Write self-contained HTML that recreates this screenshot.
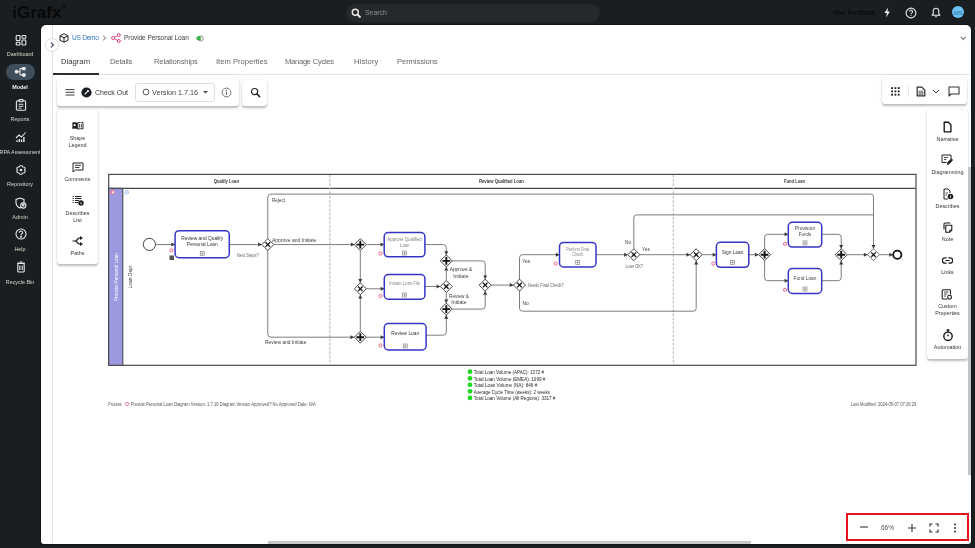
<!DOCTYPE html>
<html><head><meta charset="utf-8">
<style>
*{box-sizing:border-box;margin:0;padding:0}
html,body{width:975px;height:548px;overflow:hidden;background:#1b1e20;font-family:"Liberation Sans",sans-serif}
body>*{will-change:transform}
.abs{position:absolute}
.t{position:absolute;white-space:nowrap;line-height:1}
#panel{position:absolute;left:40.8px;top:24.9px;width:930px;height:519px;box-shadow:0 0 0 1px #131616;background:#fff;border-radius:5px 5px 3px 3px}
.card{position:absolute;background:#fff;border-radius:3px;box-shadow:0 1.2px 2.2px rgba(0,0,0,.26),0 0 1px rgba(0,0,0,.12)}
.sl{position:absolute;left:-5px;width:50px;text-align:center;color:#d9d6cf;font-size:5.4px;line-height:1;margin-top:0.5px;white-space:nowrap}
.pl{position:absolute;text-align:center;color:#363636;margin-top:.4px;font-size:5.4px;line-height:1.3}
.tab{position:absolute;top:58.3px;font-size:7.6px;color:#666;line-height:1}
</style></head>
<body>
<!-- top bar -->
<svg class="abs" style="left:0;top:0" width="80" height="25" viewBox="0 0 80 25"><text x="12.2" y="17.9" font-family="Liberation Sans" font-size="16.8" font-weight="700" fill="#080808" textLength="49.3" lengthAdjust="spacingAndGlyphs">iGrafx</text><circle cx="63.6" cy="6.8" r="1.3" fill="none" stroke="#080808" stroke-width=".7"/></svg>
<div class="abs" style="left:345.5px;top:3.6px;width:254px;height:18.2px;border-radius:9px;background:#26292c"></div>
<svg class="abs" style="left:350.5px;top:7.5px" width="11" height="11" viewBox="0 0 11 11"><circle cx="4.3" cy="4.3" r="3" fill="none" stroke="#e6e6e6" stroke-width="1.5"/><path d="M6.5 6.5L9.5 9.5" stroke="#e6e6e6" stroke-width="1.8"/></svg>
<div class="t" style="left:365px;top:10px;font-size:6.9px;color:#8f9295">Search</div>
<div class="t" style="left:832.6px;top:10.1px;font-size:6.3px;letter-spacing:-0.2px;font-weight:700;color:#0b0b0b">Give Feedback</div>
<svg class="abs" style="left:883px;top:7px" width="8" height="11" viewBox="0 0 8 11"><path d="M5.2 .4L1.4 6H3.9L3 10.4L6.9 4.6H4.4Z" fill="#f0f0f0"/></svg>
<svg class="abs" style="left:905px;top:6.8px" width="12" height="12" viewBox="0 0 12 12"><circle cx="6" cy="6" r="4.9" fill="none" stroke="#e8e8e8" stroke-width="1.1"/><path d="M4.5 4.8a1.5 1.5 0 1 1 2.2 1.3c-.5.3-.7.5-.7 1.1" fill="none" stroke="#e8e8e8" stroke-width="1.05"/><circle cx="6" cy="8.5" r=".6" fill="#e8e8e8"/></svg>
<svg class="abs" style="left:930.5px;top:6.8px" width="10" height="11" viewBox="0 0 10 11"><path d="M5 1.2c-1.8 0-2.8 1.3-2.8 3v2.6L1.1 8.3h7.8L7.8 6.8V4.2C7.8 2.5 6.8 1.2 5 1.2Z" fill="none" stroke="#ececec" stroke-width="1.1" stroke-linejoin="round"/><path d="M3.9 9.3a1.1 1.1 0 0 0 2.2 0Z" fill="#ececec"/></svg>
<div class="abs" style="left:952.1px;top:6.3px;width:12.4px;height:12.4px;border-radius:50%;background:#6cc3f3"></div>
<div class="t" style="left:952.1px;top:9.5px;width:12.4px;text-align:center;font-size:6px;color:#2f6896">MS</div>

<!-- sidebar -->
<div id="sidebar"></div>
<svg class="abs" style="left:14.5px;top:34px" width="12" height="12" viewBox="0 0 12 12" fill="none" stroke="#e8e8e8" stroke-width="1.1"><rect x="1.2" y="1.5" width="3.8" height="5" rx=".7"/><rect x="7" y="1.5" width="3.8" height="2.8" rx=".7"/><rect x="1.2" y="8.2" width="3.8" height="2.8" rx=".7"/><rect x="7" y="6" width="3.8" height="5" rx=".7"/></svg>
<div class="sl" style="top:51.3px;">Dashboard</div>
<div class="abs" style="left:6px;top:64px;width:28.5px;height:16px;border-radius:8px;background:#3e4e5a"></div>
<svg class="abs" style="left:14px;top:66px" width="12" height="12" viewBox="0 0 12 12"><circle cx="2.6" cy="5.7" r="1.9" fill="#e8e8e8"/><circle cx="9.9" cy="8.9" r="2" fill="#e8e8e8"/><rect x="8.1" y="1" width="3.5" height="3.3" fill="#e8e8e8"/><path d="M2.6 5.7H6M6 2.6V8.9M6 2.6H8.5M6 8.9H9" fill="none" stroke="#e8e8e8" stroke-width="1.1"/></svg>
<div class="sl" style="top:84.3px;font-weight:700;color:#f2f2f2">Model</div>
<svg class="abs" style="left:14.5px;top:98.7px" width="12" height="12" viewBox="0 0 12 12" fill="none" stroke="#e8e8e8" stroke-width="1.1"><rect x="1.4" y="1.8" width="9.2" height="9.4" rx="1"/><rect x="4" y=".6" width="4" height="2.2" rx=".5" fill="#1b1e20"/><path d="M3.6 5.3H8.4M3.6 7.3H8.4M3.6 9.2H6.6" stroke-width=".9"/></svg>
<div class="sl" style="top:116.8px;">Reports</div>
<svg class="abs" style="left:14.5px;top:131px" width="12" height="12" viewBox="0 0 12 12" fill="none" stroke="#e8e8e8" stroke-width="1.1"><path d="M1 7L4 4L6.5 6L10.5 1.5"/><path d="M2 11V9.5M4.3 11V8M6.6 11V8.5M8.9 11V6" stroke-width="1.4"/></svg>
<div class="sl" style="top:149.3px;">RPA Assessment</div>
<svg class="abs" style="left:14.5px;top:164px" width="12" height="12" viewBox="0 0 12 12" fill="none" stroke="#e8e8e8" stroke-width="1.1"><circle cx="6.00" cy="9.00" r="2.1" fill="#e8e8e8" stroke="none"/><circle cx="3.40" cy="7.50" r="2.1" fill="#e8e8e8" stroke="none"/><circle cx="3.40" cy="4.50" r="2.1" fill="#e8e8e8" stroke="none"/><circle cx="6.00" cy="3.00" r="2.1" fill="#e8e8e8" stroke="none"/><circle cx="8.60" cy="4.50" r="2.1" fill="#e8e8e8" stroke="none"/><circle cx="8.60" cy="7.50" r="2.1" fill="#e8e8e8" stroke="none"/><circle cx="6.00" cy="9.00" r="1.05" fill="#1b1e20" stroke="none"/><circle cx="3.40" cy="7.50" r="1.05" fill="#1b1e20" stroke="none"/><circle cx="3.40" cy="4.50" r="1.05" fill="#1b1e20" stroke="none"/><circle cx="6.00" cy="3.00" r="1.05" fill="#1b1e20" stroke="none"/><circle cx="8.60" cy="4.50" r="1.05" fill="#1b1e20" stroke="none"/><circle cx="8.60" cy="7.50" r="1.05" fill="#1b1e20" stroke="none"/><circle cx="6" cy="6" r="3.0" fill="#1b1e20" stroke="none"/><circle cx="6" cy="6" r="1.3" fill="#e8e8e8" stroke="none"/></svg>
<div class="sl" style="top:181.8px;">Repository</div>
<svg class="abs" style="left:14.5px;top:197px" width="12" height="12" viewBox="0 0 12 12" fill="none" stroke="#e8e8e8" stroke-width="1.1"><path d="M5 1L9 2.5V5.5C9 8.2 7.3 10 5 11C2.7 10 1 8.2 1 5.5V2.5Z"/><circle cx="8.3" cy="8.5" r="2.6" fill="#1b1e20"/><circle cx="8.3" cy="8.2" r=".8"/></svg>
<div class="sl" style="top:214.3px;">Admin</div>
<svg class="abs" style="left:14.5px;top:228px" width="12" height="12" viewBox="0 0 12 12" fill="none" stroke="#e8e8e8" stroke-width="1.1"><circle cx="6" cy="6" r="5"/><path d="M4.4 4.7a1.6 1.6 0 1 1 2.3 1.4c-.6.3-.7.6-.7 1.2"/><circle cx="6" cy="8.8" r=".5" fill="#e8e8e8"/></svg>
<div class="sl" style="top:246.8px;">Help</div>
<svg class="abs" style="left:14.5px;top:261px" width="12" height="12" viewBox="0 0 12 12" fill="none" stroke="#e8e8e8" stroke-width="1.1"><path d="M2 2.2H10"/><rect x="2.8" y="2.5" width="6.4" height="8.5" rx="1"/><path d="M4.8 4.5V9M7.2 4.5V9M4.5 1H7.5"/></svg>
<div class="sl" style="top:279.3px;">Recycle Bin</div>

<!-- panel -->
<div id="panel"></div>
<div class="abs" style="left:52px;top:25px;width:1px;height:518px;background:#e2e2e2"></div>
<div class="abs" style="left:45px;top:37.5px;width:14px;height:14px;border-radius:50%;background:#fff;border:1px solid #dcdcdc"></div>
<svg class="abs" style="left:48px;top:40.5px" width="8" height="8" viewBox="0 0 8 8"><path d="M3 1.6L5.4 4L3 6.4" fill="none" stroke="#464d66" stroke-width="1.2"/></svg>


<!--DIAGRAM--><svg class="abs" style="left:0;top:0" width="975" height="548" viewBox="0 0 975 548" font-family="Liberation Sans, sans-serif"><rect x="108.7" y="174.4" width="807.3" height="190.9" fill="#fff" stroke="#4a4a4a" stroke-width="1.2"/><rect x="108.7" y="188.4" width="14.1" height="176.9" fill="#9c99e0" stroke="#4a4a4a" stroke-width="1.1"/><path d="M108.7,188.4H916" fill="none" stroke="#4a4a4a" stroke-width="1.2"/><path d="M329.9,175.0V364.7" fill="none" stroke="#ececec" stroke-width="0.8"/><path d="M329.9,175.0V364.7" fill="none" stroke="#a8a8a8" stroke-width="0.8" stroke-dasharray="2.4,1.8"/><path d="M673.3,175.0V364.7" fill="none" stroke="#ececec" stroke-width="0.8"/><path d="M673.3,175.0V364.7" fill="none" stroke="#a8a8a8" stroke-width="0.8" stroke-dasharray="2.4,1.8"/><text x="226.4" y="181.6" font-size="4.8" fill="#383838" text-anchor="middle" dominant-baseline="central" font-weight="700" textLength="25.1" lengthAdjust="spacingAndGlyphs" >Qualify Loan</text><text x="501.4" y="181.6" font-size="4.8" fill="#383838" text-anchor="middle" dominant-baseline="central" font-weight="700" textLength="44.8" lengthAdjust="spacingAndGlyphs" >Review Qualified Loan</text><text x="794.5" y="181.6" font-size="4.8" fill="#383838" text-anchor="middle" dominant-baseline="central" font-weight="700" textLength="20.8" lengthAdjust="spacingAndGlyphs" >Fund Loan</text><circle cx="112.8" cy="192.3" r="2.3" fill="#f07a8e"/><circle cx="113" cy="192.3" r="1.1" fill="#fff"/><circle cx="126.9" cy="192.3" r="2.3" fill="#b5d0f7"/><circle cx="126.9" cy="192.3" r="1.1" fill="#e8f0fc"/><text x="116.1" y="277.1" font-size="4.8" fill="#fff" text-anchor="middle" dominant-baseline="central" font-weight="400" textLength="48.2" lengthAdjust="spacingAndGlyphs" transform="rotate(-90 116.1 277.1)">Provide Personal Loan</text><text x="130.4" y="277.1" font-size="4.5" fill="#3a3a3a" text-anchor="middle" dominant-baseline="central" font-weight="400" textLength="23" lengthAdjust="spacingAndGlyphs" transform="rotate(-90 130.4 277.1)">Loan Dept</text><path d="M155.6,244.6H175" fill="none" stroke="#6e6e6e" stroke-width="0.9"/><polygon points="175.1,244.6 171.4,242.6 171.4,246.6" fill="#3a3a3a"/><path d="M229.3,244.6H261.8" fill="none" stroke="#6e6e6e" stroke-width="0.9"/><polygon points="261.8,244.6 258.1,242.6 258.1,246.6" fill="#3a3a3a"/><path d="M267.8,238.6V197.1Q267.8,194.1 270.8,194.1H870.5Q873.5,194.1 873.5,197.1V248.7" fill="none" stroke="#6e6e6e" stroke-width="0.9"/><polygon points="873.5,248.7 871.5,245.0 875.5,245.0" fill="#3a3a3a"/><path d="M273.8,244.6H354.6" fill="none" stroke="#6e6e6e" stroke-width="0.9"/><polygon points="354.6,244.6 350.90000000000003,242.6 350.90000000000003,246.6" fill="#3a3a3a"/><path d="M267.8,250.6V334.2Q267.8,337.2 270.8,337.2H354.1" fill="none" stroke="#6e6e6e" stroke-width="0.9"/><polygon points="354.1,337.2 350.40000000000003,335.2 350.40000000000003,339.2" fill="#3a3a3a"/><path d="M366.6,244.6H384" fill="none" stroke="#6e6e6e" stroke-width="0.9"/><polygon points="384.2,244.6 380.5,242.6 380.5,246.6" fill="#3a3a3a"/><path d="M360.3,250.6V282.8" fill="none" stroke="#6e6e6e" stroke-width="0.9"/><polygon points="360.3,282.8 358.3,279.1 362.3,279.1" fill="#3a3a3a"/><path d="M360.3,331.2V294.8" fill="none" stroke="#6e6e6e" stroke-width="0.9"/><polygon points="360.3,294.8 358.3,298.5 362.3,298.5" fill="#3a3a3a"/><path d="M366.3,288.8H384" fill="none" stroke="#6e6e6e" stroke-width="0.9"/><polygon points="384.3,288.8 380.6,286.8 380.6,290.8" fill="#3a3a3a"/><path d="M366.3,337.2H384" fill="none" stroke="#6e6e6e" stroke-width="0.9"/><polygon points="384.3,337.2 380.6,335.2 380.6,339.2" fill="#3a3a3a"/><path d="M424.9,244.6H443.3Q446.3,244.6 446.3,247.6V254.9" fill="none" stroke="#6e6e6e" stroke-width="0.9"/><polygon points="446.3,254.9 444.3,251.20000000000002 448.3,251.20000000000002" fill="#3a3a3a"/><path d="M424.9,286.5H440.3" fill="none" stroke="#6e6e6e" stroke-width="0.9"/><polygon points="440.3,286.5 436.6,284.5 436.6,288.5" fill="#3a3a3a"/><path d="M426.1,335.2H443.3Q446.3,335.2 446.3,332.2V315.1" fill="none" stroke="#6e6e6e" stroke-width="0.9"/><polygon points="446.3,315.1 444.3,318.8 448.3,318.8" fill="#3a3a3a"/><path d="M446.3,280.5V266.9" fill="none" stroke="#6e6e6e" stroke-width="0.9"/><polygon points="446.3,266.9 444.3,270.59999999999997 448.3,270.59999999999997" fill="#3a3a3a"/><path d="M446.3,292.5V303.1" fill="none" stroke="#6e6e6e" stroke-width="0.9"/><polygon points="446.3,303.1 444.3,299.40000000000003 448.3,299.40000000000003" fill="#3a3a3a"/><path d="M452.3,260.9H482.2Q485.2,260.9 485.2,263.9V279.1" fill="none" stroke="#6e6e6e" stroke-width="0.9"/><polygon points="485.2,279.1 483.2,275.40000000000003 487.2,275.40000000000003" fill="#3a3a3a"/><path d="M452.3,309.1H482.2Q485.2,309.1 485.2,306.1V291.1" fill="none" stroke="#6e6e6e" stroke-width="0.9"/><polygon points="485.2,291.1 483.2,294.8 487.2,294.8" fill="#3a3a3a"/><path d="M491.2,285.1H513.5" fill="none" stroke="#6e6e6e" stroke-width="0.9"/><polygon points="513.5,285.1 509.8,283.1 509.8,287.1" fill="#3a3a3a"/><path d="M519.5,279.1V257.7Q519.5,254.7 522.5,254.7H559.3" fill="none" stroke="#6e6e6e" stroke-width="0.9"/><polygon points="559.5,254.7 555.8,252.7 555.8,256.7" fill="#3a3a3a"/><path d="M519.5,291.1V308.2Q519.5,311.2 522.5,311.2H693.2Q696.2,311.2 696.2,308.2V260.8" fill="none" stroke="#6e6e6e" stroke-width="0.9"/><polygon points="696.2,260.8 694.2,264.5 698.2,264.5" fill="#3a3a3a"/><path d="M596,254.7H627.8" fill="none" stroke="#6e6e6e" stroke-width="0.9"/><polygon points="627.8,254.7 624.0999999999999,252.7 624.0999999999999,256.7" fill="#3a3a3a"/><path d="M633.8,248.7V217.9Q633.8,214.9 636.8,214.9H873.5" fill="none" stroke="#6e6e6e" stroke-width="0.9"/><path d="M639.8,254.7H690.2" fill="none" stroke="#6e6e6e" stroke-width="0.9"/><polygon points="690.2,254.7 686.5,252.7 686.5,256.7" fill="#3a3a3a"/><path d="M702.2,254.7H716.2" fill="none" stroke="#6e6e6e" stroke-width="0.9"/><polygon points="716.4,254.7 712.6999999999999,252.7 712.6999999999999,256.7" fill="#3a3a3a"/><path d="M748.8,254.7H758.6" fill="none" stroke="#6e6e6e" stroke-width="0.9"/><polygon points="758.6,254.7 754.9,252.7 754.9,256.7" fill="#3a3a3a"/><path d="M764.6,248.7V237.3Q764.6,234.3 767.6,234.3H788.1" fill="none" stroke="#6e6e6e" stroke-width="0.9"/><polygon points="788.3,234.3 784.5999999999999,232.3 784.5999999999999,236.3" fill="#3a3a3a"/><path d="M764.6,260.7V277.7Q764.6,280.7 767.6,280.7H788.1" fill="none" stroke="#6e6e6e" stroke-width="0.9"/><polygon points="788.3,280.7 784.5999999999999,278.7 784.5999999999999,282.7" fill="#3a3a3a"/><path d="M821.7,234.3H838.2Q841.2,234.3 841.2,237.3V248.7" fill="none" stroke="#6e6e6e" stroke-width="0.9"/><polygon points="841.2,248.7 839.2,245.0 843.2,245.0" fill="#3a3a3a"/><path d="M821.7,280.7H838.2Q841.2,280.7 841.2,277.7V260.7" fill="none" stroke="#6e6e6e" stroke-width="0.9"/><polygon points="841.2,260.7 839.2,264.4 843.2,264.4" fill="#3a3a3a"/><path d="M847.2,254.7H867.5" fill="none" stroke="#6e6e6e" stroke-width="0.9"/><polygon points="867.5,254.7 863.8,252.7 863.8,256.7" fill="#3a3a3a"/><path d="M879.5,254.7H893" fill="none" stroke="#6e6e6e" stroke-width="0.9"/><polygon points="893,254.7 889.3,252.7 889.3,256.7" fill="#3a3a3a"/><circle cx="149.4" cy="244.4" r="6.1" fill="#fff" stroke="#333" stroke-width="0.9"/><circle cx="897.3" cy="254.7" r="4.1" fill="#fff" stroke="#111" stroke-width="1.8"/><rect x="175.1" y="230.7" width="54.20000000000002" height="27.0" rx="4" fill="#fff" stroke="#3535c8" stroke-width="1.5"/><text x="202.2" y="238.4" font-size="4.8" fill="#333" text-anchor="middle" dominant-baseline="central" font-weight="400" textLength="41.8" lengthAdjust="spacingAndGlyphs" >Review and Qualify</text><text x="202.2" y="244.3" font-size="4.8" fill="#333" text-anchor="middle" dominant-baseline="central" font-weight="400" textLength="30.9" lengthAdjust="spacingAndGlyphs" >Personal Loan</text><rect x="200.2" y="251.6" width="4" height="4" fill="#fff" stroke="#777" stroke-width="0.6"/><path d="M201.0,253.6H203.39999999999998M202.2,252.4V254.79999999999998" stroke="#555" stroke-width="0.5"/><rect x="384.2" y="232.5" width="40.69999999999999" height="24.30000000000001" rx="4" fill="#fff" stroke="#3535c8" stroke-width="1.5"/><text x="404.54999999999995" y="239.7" font-size="4.5" fill="#808080" text-anchor="middle" dominant-baseline="central" font-weight="400" textLength="34.4" lengthAdjust="spacingAndGlyphs" >Approve Qualified</text><text x="404.54999999999995" y="245.2" font-size="4.5" fill="#808080" text-anchor="middle" dominant-baseline="central" font-weight="400" textLength="9.5" lengthAdjust="spacingAndGlyphs" >Loan</text><rect x="402.54999999999995" y="251" width="4" height="4" fill="#fff" stroke="#777" stroke-width="0.6"/><path d="M403.34999999999997,253H405.74999999999994M404.54999999999995,251.8V254.2" stroke="#555" stroke-width="0.5"/><rect x="384.3" y="274.6" width="40.599999999999966" height="24.599999999999966" rx="4" fill="#fff" stroke="#3535c8" stroke-width="1.5"/><text x="404.6" y="283.8" font-size="4.5" fill="#8a8a8a" text-anchor="middle" dominant-baseline="central" font-weight="400" textLength="30.8" lengthAdjust="spacingAndGlyphs" >Initiate Loan File</text><rect x="402.6" y="293" width="4" height="4" fill="#fff" stroke="#777" stroke-width="0.6"/><path d="M403.40000000000003,295H405.8M404.6,293.8V296.2" stroke="#555" stroke-width="0.5"/><rect x="384.3" y="323.5" width="41.80000000000001" height="26.5" rx="4" fill="#fff" stroke="#3535c8" stroke-width="1.5"/><text x="405.20000000000005" y="333.6" font-size="4.8" fill="#333" text-anchor="middle" dominant-baseline="central" font-weight="400" textLength="27.7" lengthAdjust="spacingAndGlyphs" >Review Loan</text><rect x="403.20000000000005" y="344" width="4" height="4" fill="#fff" stroke="#777" stroke-width="0.6"/><path d="M404.00000000000006,346H406.40000000000003M405.20000000000005,344.8V347.2" stroke="#555" stroke-width="0.5"/><rect x="559.5" y="242.4" width="36.5" height="24.599999999999994" rx="4" fill="#fff" stroke="#3535c8" stroke-width="1.5"/><text x="577.75" y="249.2" font-size="4.5" fill="#8a8a8a" text-anchor="middle" dominant-baseline="central" font-weight="400" textLength="23.2" lengthAdjust="spacingAndGlyphs" >Perform Final</text><text x="577.75" y="254.2" font-size="4.5" fill="#8a8a8a" text-anchor="middle" dominant-baseline="central" font-weight="400" textLength="11" lengthAdjust="spacingAndGlyphs" >Check</text><rect x="575.75" y="260.5" width="4" height="4" fill="#fff" stroke="#777" stroke-width="0.6"/><path d="M576.55,262.5H578.95M577.75,261.3V263.7" stroke="#555" stroke-width="0.5"/><rect x="716.4" y="242.3" width="32.39999999999998" height="25.0" rx="4" fill="#fff" stroke="#3535c8" stroke-width="1.5"/><text x="732.5999999999999" y="252.1" font-size="4.8" fill="#333" text-anchor="middle" dominant-baseline="central" font-weight="400" textLength="21.5" lengthAdjust="spacingAndGlyphs" >Sign Loan</text><rect x="730.5999999999999" y="260.5" width="4" height="4" fill="#fff" stroke="#777" stroke-width="0.6"/><path d="M731.3999999999999,262.5H733.8M732.5999999999999,261.3V263.7" stroke="#555" stroke-width="0.5"/><rect x="788.3" y="222.3" width="33.40000000000009" height="24.799999999999983" rx="4" fill="#fff" stroke="#3535c8" stroke-width="1.5"/><text x="805.0" y="228.6" font-size="4.8" fill="#444" text-anchor="middle" dominant-baseline="central" font-weight="400" textLength="20.4" lengthAdjust="spacingAndGlyphs" >Provision</text><text x="805.0" y="234.7" font-size="4.8" fill="#444" text-anchor="middle" dominant-baseline="central" font-weight="400" textLength="12.5" lengthAdjust="spacingAndGlyphs" >Funds</text><rect x="803.0" y="240.9" width="4" height="4" fill="#fff" stroke="#777" stroke-width="0.6"/><path d="M803.8,242.9H806.2M805.0,241.70000000000002V244.1" stroke="#555" stroke-width="0.5"/><rect x="788.3" y="268.4" width="33.40000000000009" height="25.0" rx="4" fill="#fff" stroke="#3535c8" stroke-width="1.5"/><text x="805.0" y="278.5" font-size="4.8" fill="#444" text-anchor="middle" dominant-baseline="central" font-weight="400" textLength="22.8" lengthAdjust="spacingAndGlyphs" >Fund Loan</text><rect x="803.0" y="287" width="4" height="4" fill="#fff" stroke="#777" stroke-width="0.6"/><path d="M803.8,289H806.2M805.0,287.8V290.2" stroke="#555" stroke-width="0.5"/><polygon points="267.8,238.6 273.8,244.6 267.8,250.6 261.8,244.6" fill="#fff" stroke="#333" stroke-width="0.9"/><path d="M265.5,242.29999999999998L270.1,246.9M270.1,242.29999999999998L265.5,246.9" stroke="#111" stroke-width="1.25"/><polygon points="360.3,238.6 366.3,244.6 360.3,250.6 354.3,244.6" fill="#fff" stroke="#333" stroke-width="0.9"/><path d="M356.40000000000003,244.6H364.2M360.3,240.7V248.5" stroke="#111" stroke-width="1.9"/><polygon points="360.3,282.8 366.3,288.8 360.3,294.8 354.3,288.8" fill="#fff" stroke="#333" stroke-width="0.9"/><path d="M358.0,286.5L362.6,291.1M362.6,286.5L358.0,291.1" stroke="#111" stroke-width="1.25"/><polygon points="360.3,331.2 366.3,337.2 360.3,343.2 354.3,337.2" fill="#fff" stroke="#333" stroke-width="0.9"/><path d="M356.40000000000003,337.2H364.2M360.3,333.3V341.09999999999997" stroke="#111" stroke-width="1.9"/><polygon points="446.3,254.89999999999998 452.3,260.9 446.3,266.9 440.3,260.9" fill="#fff" stroke="#333" stroke-width="0.9"/><path d="M442.40000000000003,260.9H450.2M446.3,257.0V264.79999999999995" stroke="#111" stroke-width="1.9"/><polygon points="446.3,280.5 452.3,286.5 446.3,292.5 440.3,286.5" fill="#fff" stroke="#333" stroke-width="0.9"/><path d="M444.0,284.2L448.6,288.8M448.6,284.2L444.0,288.8" stroke="#111" stroke-width="1.25"/><polygon points="446.3,303.1 452.3,309.1 446.3,315.1 440.3,309.1" fill="#fff" stroke="#333" stroke-width="0.9"/><path d="M442.40000000000003,309.1H450.2M446.3,305.20000000000005V313.0" stroke="#111" stroke-width="1.9"/><polygon points="485.2,279.1 491.2,285.1 485.2,291.1 479.2,285.1" fill="#fff" stroke="#333" stroke-width="0.9"/><path d="M482.9,282.8L487.5,287.40000000000003M487.5,282.8L482.9,287.40000000000003" stroke="#111" stroke-width="1.25"/><polygon points="519.5,279.1 525.5,285.1 519.5,291.1 513.5,285.1" fill="#fff" stroke="#333" stroke-width="0.9"/><path d="M517.2,282.8L521.8,287.40000000000003M521.8,282.8L517.2,287.40000000000003" stroke="#111" stroke-width="1.25"/><polygon points="633.8,248.7 639.8,254.7 633.8,260.7 627.8,254.7" fill="#fff" stroke="#333" stroke-width="0.9"/><path d="M631.5,252.39999999999998L636.0999999999999,257.0M636.0999999999999,252.39999999999998L631.5,257.0" stroke="#111" stroke-width="1.25"/><polygon points="696.2,248.7 702.2,254.7 696.2,260.7 690.2,254.7" fill="#fff" stroke="#333" stroke-width="0.9"/><path d="M693.9000000000001,252.39999999999998L698.5,257.0M698.5,252.39999999999998L693.9000000000001,257.0" stroke="#111" stroke-width="1.25"/><polygon points="764.6,248.7 770.6,254.7 764.6,260.7 758.6,254.7" fill="#fff" stroke="#333" stroke-width="0.9"/><path d="M760.7,254.7H768.5M764.6,250.79999999999998V258.59999999999997" stroke="#111" stroke-width="1.9"/><polygon points="841.2,248.7 847.2,254.7 841.2,260.7 835.2,254.7" fill="#fff" stroke="#333" stroke-width="0.9"/><path d="M837.3000000000001,254.7H845.1M841.2,250.79999999999998V258.59999999999997" stroke="#111" stroke-width="1.9"/><polygon points="873.5,248.7 879.5,254.7 873.5,260.7 867.5,254.7" fill="#fff" stroke="#666" stroke-width="0.9"/><path d="M871.2,252.39999999999998L875.8,257.0M875.8,252.39999999999998L871.2,257.0" stroke="#111" stroke-width="1.25"/><circle cx="171.4" cy="250.4" r="1.6" fill="#fff" stroke="#e8446e" stroke-width="0.8"/><circle cx="380.5" cy="253.5" r="1.6" fill="#fff" stroke="#e8446e" stroke-width="0.8"/><circle cx="380.5" cy="296" r="1.6" fill="#fff" stroke="#e8446e" stroke-width="0.8"/><circle cx="380.5" cy="345.4" r="1.6" fill="#fff" stroke="#e8446e" stroke-width="0.8"/><circle cx="555.6" cy="263.6" r="1.6" fill="#fff" stroke="#e8446e" stroke-width="0.8"/><circle cx="713.3" cy="263.6" r="1.6" fill="#fff" stroke="#e8446e" stroke-width="0.8"/><circle cx="785" cy="243.8" r="1.6" fill="#fff" stroke="#e8446e" stroke-width="0.8"/><circle cx="785" cy="289.8" r="1.6" fill="#fff" stroke="#e8446e" stroke-width="0.8"/><rect x="169.5" y="255.5" width="4.5" height="4.5" fill="#555"/><text x="272" y="200.7" font-size="4.6" fill="#404040" text-anchor="start" dominant-baseline="central" font-weight="400" textLength="13" lengthAdjust="spacingAndGlyphs" >Reject</text><text x="272" y="240.8" font-size="4.6" fill="#404040" text-anchor="start" dominant-baseline="central" font-weight="400" textLength="44.3" lengthAdjust="spacingAndGlyphs" >Approve and Initiate</text><text x="264.9" y="342.1" font-size="4.6" fill="#404040" text-anchor="start" dominant-baseline="central" font-weight="400" textLength="41.6" lengthAdjust="spacingAndGlyphs" >Review and Initiate</text><text x="247.8" y="255" font-size="4.5" fill="#666" text-anchor="middle" dominant-baseline="central" font-weight="400" textLength="21.8" lengthAdjust="spacingAndGlyphs" >Next Steps?</text><text x="449.7" y="269.7" font-size="4.6" fill="#404040" text-anchor="start" dominant-baseline="central" font-weight="400" textLength="22.6" lengthAdjust="spacingAndGlyphs" >Approve &amp;</text><text x="460.9" y="276.3" font-size="4.6" fill="#404040" text-anchor="middle" dominant-baseline="central" font-weight="400" textLength="15.4" lengthAdjust="spacingAndGlyphs" >Initiate</text><text x="449.1" y="296.4" font-size="4.6" fill="#404040" text-anchor="start" dominant-baseline="central" font-weight="400" textLength="19.7" lengthAdjust="spacingAndGlyphs" >Review &amp;</text><text x="459" y="302.3" font-size="4.6" fill="#404040" text-anchor="middle" dominant-baseline="central" font-weight="400" textLength="15.4" lengthAdjust="spacingAndGlyphs" >Initiate</text><text x="522.2" y="261.3" font-size="4.6" fill="#404040" text-anchor="start" dominant-baseline="central" font-weight="400" textLength="8" lengthAdjust="spacingAndGlyphs" >Yes</text><text x="522.4" y="303" font-size="4.6" fill="#404040" text-anchor="start" dominant-baseline="central" font-weight="400" textLength="6.3" lengthAdjust="spacingAndGlyphs" >No</text><text x="527.7" y="285.5" font-size="4.5" fill="#666" text-anchor="start" dominant-baseline="central" font-weight="400" textLength="35.9" lengthAdjust="spacingAndGlyphs" >Needs Final Check?</text><text x="625" y="242.7" font-size="4.6" fill="#404040" text-anchor="start" dominant-baseline="central" font-weight="400" textLength="6" lengthAdjust="spacingAndGlyphs" >No</text><text x="642.1" y="249.3" font-size="4.6" fill="#404040" text-anchor="start" dominant-baseline="central" font-weight="400" textLength="7.7" lengthAdjust="spacingAndGlyphs" >Yes</text><text x="634.2" y="266.8" font-size="4.5" fill="#666" text-anchor="middle" dominant-baseline="central" font-weight="400" textLength="17.5" lengthAdjust="spacingAndGlyphs" >Loan OK?</text><circle cx="470" cy="371.7" r="2.4" fill="#1fd81f"/><text x="473.8" y="372.5" font-size="4.6" fill="#2a2a2a" text-anchor="start" dominant-baseline="central" font-weight="400" textLength="70.2" lengthAdjust="spacingAndGlyphs" >Total Loan Volume (APAC): 1372 #</text><circle cx="470" cy="378.3" r="2.4" fill="#1fd81f"/><text x="473.8" y="379.1" font-size="4.6" fill="#2a2a2a" text-anchor="start" dominant-baseline="central" font-weight="400" textLength="71.5" lengthAdjust="spacingAndGlyphs" >Total Loan Volume (EMEA): 1099 #</text><circle cx="470" cy="384.8" r="2.4" fill="#1fd81f"/><text x="473.8" y="385.6" font-size="4.6" fill="#2a2a2a" text-anchor="start" dominant-baseline="central" font-weight="400" textLength="63.5" lengthAdjust="spacingAndGlyphs" >Total Loan Volume (NA): 846 #</text><circle cx="470" cy="391.3" r="2.4" fill="#1fd81f"/><text x="473.8" y="392.1" font-size="4.6" fill="#2a2a2a" text-anchor="start" dominant-baseline="central" font-weight="400" textLength="76.2" lengthAdjust="spacingAndGlyphs" >Average Cycle Time (weeks): 2 weeks</text><circle cx="470" cy="397.9" r="2.4" fill="#1fd81f"/><text x="473.8" y="398.7" font-size="4.6" fill="#2a2a2a" text-anchor="start" dominant-baseline="central" font-weight="400" textLength="81.6" lengthAdjust="spacingAndGlyphs" >Total Loan Volume (All Regions): 3317 #</text><text x="108.3" y="404.6" font-size="4.5" fill="#555" text-anchor="start" dominant-baseline="central" font-weight="400" textLength="14" lengthAdjust="spacingAndGlyphs" >Process:</text><path d="M125.3,403.4Q125.3,402.6 126.1,402.6H128.1Q128.9,402.6 128.9,403.4V404.4L127.1,406L125.3,404.4Z" fill="none" stroke="#e8446e" stroke-width=".7"/><text x="130.8" y="404.6" font-size="4.5" fill="#555" text-anchor="start" dominant-baseline="central" font-weight="400" textLength="185" lengthAdjust="spacingAndGlyphs" >Provide Personal Loan Diagram Version: 1.7.16 Diagram Version Approved? No Approved Date: N/A</text><text x="851" y="404.6" font-size="4.5" fill="#555" text-anchor="start" dominant-baseline="central" font-weight="400" textLength="65.3" lengthAdjust="spacingAndGlyphs" >Last Modified: 2024-05-07 07:26:29</text></svg><!--/DIAGRAM-->
<!-- breadcrumb -->
<svg class="abs" style="left:59px;top:33px" width="10" height="10" viewBox="0 0 10 10" fill="none" stroke="#222" stroke-width="1"><path d="M5 .8L9 2.8V7.2L5 9.2L1 7.2V2.8Z"/><path d="M1 2.8L5 4.8L9 2.8M5 4.8V9.2"/></svg>
<div class="t" style="left:72.3px;top:34.6px;font-size:6.6px;letter-spacing:-0.28px;color:#3276c4">US Demo</div>
<svg class="abs" style="left:101.5px;top:35px" width="5" height="6" viewBox="0 0 5 6"><path d="M1.2 .8L3.6 3L1.2 5.2" fill="none" stroke="#555" stroke-width=".9"/></svg>
<svg class="abs" style="left:110.5px;top:33px" width="10" height="10" viewBox="0 0 10 10" fill="none" stroke="#e0457b" stroke-width="1"><circle cx="2.2" cy="5" r="1.6"/><circle cx="7.8" cy="2" r="1.5"/><circle cx="7.8" cy="8" r="1.5"/><path d="M3.7 4.3L6.4 2.6M3.7 5.7L6.4 7.4"/></svg>
<div class="t" style="left:124.4px;top:35.4px;font-size:6.5px;letter-spacing:-0.05px;color:#404040">Provide Personal Loan</div>
<svg class="abs" style="left:195.5px;top:34.5px" width="8" height="7" viewBox="0 0 8 7"><circle cx="4.8" cy="3.5" r="2.5" fill="#fff" stroke="#777" stroke-width=".8"/><circle cx="2.7" cy="3.2" r="2.3" fill="#3bb34a"/></svg>
<svg class="abs" style="left:960.3px;top:35.8px" width="6.5" height="4.5" viewBox="0 0 6.5 4.5"><path d="M.7 .8L3.25 3.4L5.8 .8" fill="none" stroke="#7a7a7a" stroke-width="1.05"/></svg>
<!-- tabs -->
<div class="tab" style="left:61px;color:#333;font-size:7.7px">Diagram</div>
<div class="tab" style="left:110px;letter-spacing:-0.15px">Details</div>
<div class="tab" style="left:153.5px;letter-spacing:-0.15px">Relationships</div>
<div class="tab" style="left:215.9px">Item Properties</div>
<div class="tab" style="left:285.4px;letter-spacing:-0.27px">Manage Cycles</div>
<div class="tab" style="left:353.8px;letter-spacing:0.13px">History</div>
<div class="tab" style="left:397.4px;letter-spacing:-0.07px">Permissions</div>
<div class="abs" style="left:53px;top:74px;width:917px;height:1px;background:#e3e3e3"></div>
<div class="abs" style="left:53px;top:72.9px;width:46px;height:1.6px;background:#2e2e2e"></div>
<!-- toolbar -->
<div class="card" style="left:56.6px;top:78.5px;width:181.5px;height:27px"></div>
<svg class="abs" style="left:64.5px;top:88px" width="10" height="8" viewBox="0 0 10 8"><path d="M.6 1.6H9.5M.6 4.3H9.5M.6 7H9.5" stroke="#333" stroke-width=".95"/></svg>
<svg class="abs" style="left:81.2px;top:86.6px" width="11" height="11" viewBox="0 0 11 11"><circle cx="5.5" cy="5.5" r="5.1" fill="#161a22"/><path d="M3.6 7.4L6.6 4.4" fill="none" stroke="#fff" stroke-width="1.1"/><circle cx="7" cy="4" r="1.1" fill="#fff"/></svg>
<div class="t" style="left:94.8px;top:88.8px;font-size:7px;color:#333">Check Out</div>
<div class="abs" style="left:134.5px;top:82.6px;width:80.2px;height:18.8px;border:1px solid #dedede;border-radius:3px"></div>
<svg class="abs" style="left:141.5px;top:88px" width="8" height="8" viewBox="0 0 8 8"><circle cx="4" cy="4" r="2.9" fill="none" stroke="#444" stroke-width=".9"/></svg>
<div class="t" style="left:151.9px;top:88.6px;font-size:7.2px;color:#444">Version 1.7.16</div>
<svg class="abs" style="left:202.8px;top:91.3px" width="5" height="3" viewBox="0 0 5 3"><path d="M0 0H5L2.5 2.6Z" fill="#444"/></svg>
<svg class="abs" style="left:220.5px;top:87px" width="11" height="11" viewBox="0 0 11 11" fill="none" stroke="#666" stroke-width=".9"><circle cx="5.5" cy="5.5" r="4.4"/><path d="M5.5 4.7V8"/><circle cx="5.5" cy="3.3" r=".35" fill="#666"/></svg>
<div class="card" style="left:242.2px;top:79.7px;width:25.3px;height:25.5px"></div>
<svg class="abs" style="left:249.5px;top:86.5px" width="11" height="11" viewBox="0 0 11 11"><circle cx="4.6" cy="4.6" r="3.1" fill="none" stroke="#222" stroke-width="1.2"/><path d="M6.8 6.8L9.6 9.6" stroke="#222" stroke-width="1.5" stroke-linecap="round"/></svg>
<!-- right toolbar -->
<div class="card" style="left:881.8px;top:79.1px;width:85px;height:24.8px"></div>
<svg class="abs" style="left:890.5px;top:86.8px" width="10" height="10" viewBox="0 0 10 10" fill="#1a1a1a"><rect x="0.20000000000000007" y="0.20000000000000007" width="1.8" height="1.8"/><rect x="3.5000000000000004" y="0.20000000000000007" width="1.8" height="1.8"/><rect x="6.8" y="0.20000000000000007" width="1.8" height="1.8"/><rect x="0.20000000000000007" y="3.5000000000000004" width="1.8" height="1.8"/><rect x="3.5000000000000004" y="3.5000000000000004" width="1.8" height="1.8"/><rect x="6.8" y="3.5000000000000004" width="1.8" height="1.8"/><rect x="0.20000000000000007" y="6.8" width="1.8" height="1.8"/><rect x="3.5000000000000004" y="6.8" width="1.8" height="1.8"/><rect x="6.8" y="6.8" width="1.8" height="1.8"/></svg>
<div class="abs" style="left:907.5px;top:85px;width:1px;height:12px;background:#e6e6e6"></div>
<svg class="abs" style="left:915.5px;top:86px" width="10" height="11" viewBox="0 0 10 11"><path d="M1.2 1.2H5.8L8.8 4.2V9.8H1.2Z" fill="#fff" stroke="#2a2a2a" stroke-width="1.2" stroke-linejoin="round"/><rect x="3" y="5" width="4" height="3.4" fill="#bbb" stroke="#444" stroke-width=".5"/><path d="M3.2 8.2L5 6.3L6.8 8.2" fill="none" stroke="#444" stroke-width=".5"/></svg>
<svg class="abs" style="left:931.5px;top:88.5px" width="8" height="5" viewBox="0 0 8 5"><path d="M1 1L4 4L7 1" fill="none" stroke="#333" stroke-width="1"/></svg>
<svg class="abs" style="left:948px;top:86px" width="12" height="11" viewBox="0 0 12 11"><path d="M1 1H11V8H3L1 10Z" fill="none" stroke="#333" stroke-width="1.1" stroke-linejoin="round"/></svg>


<!-- left palette -->
<div class="card" style="left:56.6px;top:110.4px;width:40.7px;height:154.3px"></div>
<svg class="abs" style="left:71.8px;top:122.4px" width="11.5" height="7.5" viewBox="0 0 11.5 7.5"><path d="M.4 .6L3 .2L5.7 .8V7.2L3 6.6L.4 7Z" fill="#1c1c1c"/><circle cx="2.6" cy="3.2" r="1.1" fill="#fff"/><path d="M5.8 .8L8.4 .2L11 .6V7L8.4 6.6L5.8 7.2Z" fill="#fff" stroke="#1c1c1c" stroke-width=".9"/><path d="M7.6 2.2V5.6M9.4 2.2V5.6" stroke="#1c1c1c" stroke-width=".8"/></svg>
<div class="pl" style="left:57px;width:41px;top:135px">Shape<br>Legend</div>
<svg class="abs" style="left:71.5px;top:161.5px" width="12" height="11" viewBox="0 0 12 11" fill="none" stroke="#222" stroke-width="1"><path d="M1 1H11V8H3.5L1 10Z" stroke-linejoin="round"/><path d="M3 3.3H9M3 5.5H7.5" stroke-width=".9"/></svg>
<div class="pl" style="left:57px;width:41px;top:175.5px">Comments</div>
<svg class="abs" style="left:71.5px;top:195.5px" width="12" height="10" viewBox="0 0 12 10"><path d="M3 .5H9.5M3 2.5H9.5M3 4.5H7M3 6.5H6" stroke="#222" stroke-width="1"/><path d="M.5 .5H2M.5 2.5H2M.5 4.5H2M.5 6.5H2" stroke="#555" stroke-width="1"/><circle cx="9" cy="7" r="2.7" fill="#1c1c1c"/><path d="M9 6.2V8.3" stroke="#fff" stroke-width=".8"/></svg>
<div class="pl" style="left:57px;width:41px;top:209.5px">Describes<br>List</div>
<svg class="abs" style="left:71.8px;top:236px" width="11" height="10" viewBox="0 0 11 10"><path d="M.5 5H3.8L7 2H9M3.8 5L7 8H9" fill="none" stroke="#1c1c1c" stroke-width="1.2" stroke-linejoin="round"/><path d="M8 0L11 2L8 4ZM8 6L11 8L8 10Z" fill="#1c1c1c"/></svg>
<div class="pl" style="left:57px;width:41px;top:250px">Paths</div>
<!-- right palette -->
<div class="card" style="left:927px;top:109.8px;width:40.5px;height:248.6px"></div>
<svg class="abs" style="left:941.5px;top:120.5px" width="11" height="12" viewBox="0 0 11 12" fill="none" stroke="#151515" stroke-width="1.35"><path d="M2.2 1.2H6.4L8.9 3.7V10.8H2.2Z" stroke-linejoin="round"/></svg>
<div class="pl" style="left:927px;width:41px;top:135.5px">Narrative</div>
<svg class="abs" style="left:941px;top:154px" width="12" height="12" viewBox="0 0 12 12" fill="none" stroke="#222" stroke-width="1"><path d="M1 1H10V6.5M1 1V8.5H5.5"/><path d="M3 3.5H7M3 5.5H5.5" stroke-width=".8"/><path d="M6.5 10.5L7 8L10.5 5L11.5 6L8.5 9.5Z" fill="#222"/></svg>
<div class="pl" style="left:925px;width:45px;top:168.5px">Diagramming</div>
<svg class="abs" style="left:941.5px;top:188px" width="12" height="12" viewBox="0 0 12 12"><path d="M2 1H6L8 3V5M2 1V11H6" fill="none" stroke="#222" stroke-width="1"/><path d="M3.5 5H6M3.5 7H5" stroke="#222" stroke-width=".8"/><circle cx="8.5" cy="8.5" r="2.8" fill="#222"/><path d="M8.5 7.5V9.8" stroke="#fff" stroke-width=".8"/></svg>
<div class="pl" style="left:927px;width:41px;top:202.5px">Describes</div>
<svg class="abs" style="left:941.5px;top:221.5px" width="12" height="12" viewBox="0 0 12 12" fill="none" stroke="#1a1a1a" stroke-width="1.1"><path d="M2 7.5V2.2Q2 1 3.2 1H8.5" /><path d="M3.8 3.3H9.8V8L7.6 10.3H3.8Z" fill="#fff" stroke-linejoin="round"/><path d="M9.8 8H7.6V10.3" stroke-width=".8"/></svg>
<div class="pl" style="left:927px;width:41px;top:236px">Note</div>
<svg class="abs" style="left:941.5px;top:256.8px" width="11" height="7" viewBox="0 0 11 7" fill="none" stroke="#1a1a1a" stroke-width="1.2"><path d="M4.6 .8H3A2.7 2.7 0 0 0 3 6.2H4.6M6.4 .8H8A2.7 2.7 0 0 1 8 6.2H6.4M3.4 3.5H7.6"/></svg>
<div class="pl" style="left:927px;width:41px;top:269px">Links</div>
<svg class="abs" style="left:941px;top:288.5px" width="12" height="11" viewBox="0 0 12 11"><path d="M6.5 10H2.2Q1.2 10 1.2 9V1.8Q1.2 .8 2.2 .8H8.5Q9.5 .8 9.5 1.8V5.5" fill="none" stroke="#1a1a1a" stroke-width="1.1"/><path d="M3 3H7.5M3 5H6.5M3 7H5" stroke="#1a1a1a" stroke-width=".8"/><circle cx="8.6" cy="8.2" r="1.9" fill="#fff" stroke="#1a1a1a" stroke-width="1.1"/></svg>
<div class="pl" style="left:927px;width:41px;top:303px">Custom<br>Properties</div>
<svg class="abs" style="left:941.5px;top:328.5px" width="12" height="13" viewBox="0 0 12 13" fill="none" stroke="#151515" stroke-width="1.35"><circle cx="6" cy="7.3" r="4.2"/><path d="M4.6 1H7.4M6 1V3M6 7.3V5.6"/></svg>
<div class="pl" style="left:925px;width:45px;top:343.5px">Automation</div>
<!-- scrollbars -->
<div class="abs" style="left:967.5px;top:167px;width:2.5px;height:308px;background:#c4c4c4"></div>
<div class="abs" style="left:268px;top:540.5px;width:482.5px;height:2.5px;background:#c8c8c8"></div>
<!-- zoom controls -->
<div class="abs" style="left:845.5px;top:512.5px;width:123px;height:27.5px;border:2px solid #e3141e"></div>
<svg class="abs" style="left:859px;top:524px" width="10" height="6" viewBox="0 0 10 6"><path d="M1 3H9" stroke="#333" stroke-width="1.1"/></svg>
<div class="t" style="left:881px;top:524.5px;font-size:6.5px;color:#555">66%</div>
<svg class="abs" style="left:907px;top:522.5px" width="10" height="10" viewBox="0 0 10 10"><path d="M1 5H9M5 1V9" stroke="#333" stroke-width="1.1"/></svg>
<svg class="abs" style="left:928.5px;top:522.5px" width="10" height="10" viewBox="0 0 10 10" fill="none" stroke="#333" stroke-width="1.2"><path d="M1 3.5V1H3.5M6.5 1H9V3.5M9 6.5V9H6.5M3.5 9H1V6.5"/></svg>
<svg class="abs" style="left:951.5px;top:522.5px" width="6" height="10" viewBox="0 0 6 10" fill="#333"><circle cx="3" cy="1.5" r="1"/><circle cx="3" cy="5" r="1"/><circle cx="3" cy="8.5" r="1"/></svg>

</body></html>
